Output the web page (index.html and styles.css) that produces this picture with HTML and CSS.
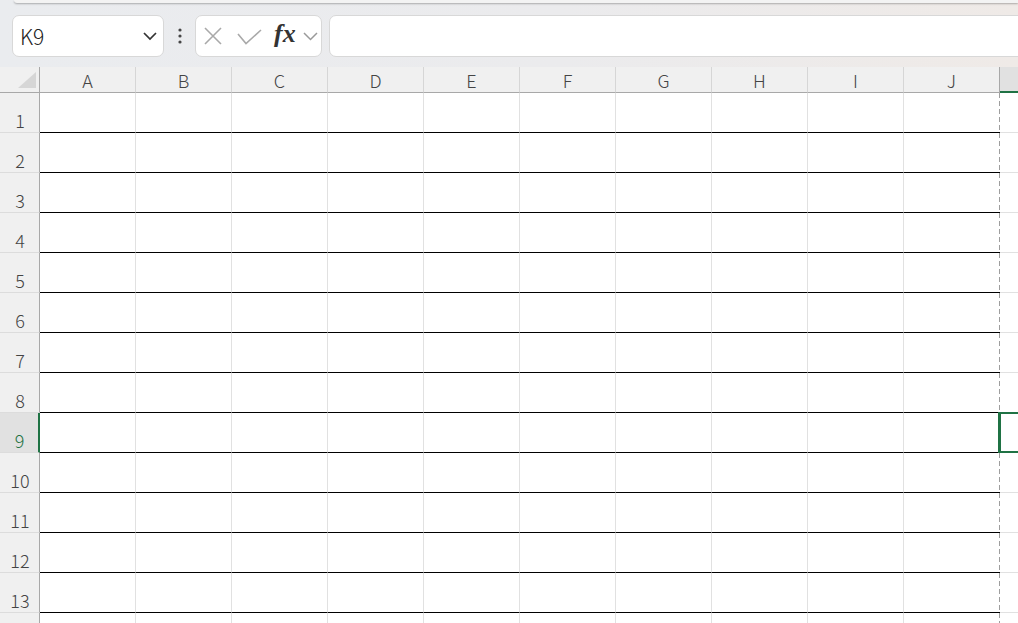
FILE: index.html
```html
<!DOCTYPE html>
<html lang="ja">
<head>
  <meta charset="UTF-8">
  <meta name="viewport" content="width=device-width, initial-scale=1.0">
  <title>Book1 - Excel</title>
  <link rel="stylesheet" href="styles.css">
</head>
<body>
<div class="top-area">
  <div class="ribbon-edge"></div>
  <div class="formula-bar">
    <div class="name-box">
      <span class="cell-ref">K9</span>
      <svg class="name-arrow" width="14" height="9" viewBox="0 0 14 9"><polyline points="1,1 7,7 13,1" fill="none" stroke="#333" stroke-width="1.7"/></svg>
    </div>
    <div class="more-dots">
      <svg width="4" height="16" viewBox="0 0 4 16"><circle cx="2" cy="2" r="1.6"/><circle cx="2" cy="8" r="1.6"/><circle cx="2" cy="14" r="1.6"/></svg>
    </div>
    <div class="func-box">
      <svg class="icon-cancel" width="18" height="18" viewBox="0 0 18 18"><path d="M1 1 L17 17 M17 1 L1 17" stroke="#a9a9a9" stroke-width="1.6" fill="none"/></svg>
      <svg class="icon-enter" width="25" height="16" viewBox="0 0 25 16"><polyline points="1,5 9,14.5 24,1" fill="none" stroke="#a9a9a9" stroke-width="1.6"/></svg>
      <span class="fx">fx</span>
      <svg class="fx-arrow" width="15" height="9" viewBox="0 0 15 9"><polyline points="1,1 7.5,7.5 14,1" fill="none" stroke="#9a9a9a" stroke-width="1.5"/></svg>
    </div>
    <div class="formula-input"></div>
  </div>
</div>

<div class="sheet" id="sheet">
  <div class="selection"></div> <!-- active cell K9 -->
</div>

<script>
  const sheet = document.getElementById('sheet');
  const columns = ['A', 'B', 'C', 'D', 'E', 'F', 'G', 'H', 'I', 'J'];

  function addCell(className, text) {
    const div = document.createElement('div');
    div.className = className;
    if (text) div.textContent = text;
    sheet.appendChild(div);
  }

  // header row
  addCell('corner');
  columns.forEach(c => addCell('col-head', c));
  addCell('col-head active');

  // rows 1..13, plus the top of row 14 (its number is below the window)
  for (let r = 1; r <= 14; r++) {
    const label = r < 14 ? String(r) : '';
    addCell(r === 9 ? 'row-head active' : 'row-head', label);
    columns.forEach((c, i) => addCell(i === 9 ? 'cell page-edge' : 'cell'));
    addCell('cell outside');
  }
</script>
</body>
</html>
```

FILE: styles.css
```css
body {
  margin: 0;
  overflow: hidden;
  background-color: white;
  color: #444;
  font-family: "Noto Sans CJK JP", "Noto Sans", sans-serif;
  font-weight: 300;
}
/* Formula bar area */
.top-area {
  height: 67px;
  background: linear-gradient(90deg, #eaecef 0%, #ebebed 55%, #efeae7 100%);
}
.ribbon-edge {
  height: 3px;
  margin-left: 14px;
  background-color: #f3f3f3;
  border-bottom-left-radius: 10px;
  box-shadow: 0 1px 2px rgba(0, 0, 0, 0.28);
}
.formula-bar {
  display: flex;
  align-items: center;
  height: 42px;
  margin-top: 12px;
}
.name-box,
.func-box,
.formula-input {
  box-sizing: border-box;
  height: 42px;
  background-color: white;
  border: 1px solid #d8d8d8;
  border-radius: 7px;
}
.name-box {
  width: 152px;
  margin-left: 12px;
  display: flex;
  align-items: center;
  justify-content: space-between;
  padding: 0 6px 0 7px;
}
.cell-ref {
  font-size: 21px;
  color: #222;
  line-height: 1;
}
.more-dots {
  width: 31px;
  display: flex;
  justify-content: center;
  padding-left: 1px;
  box-sizing: border-box;
}
.more-dots svg {
  fill: #454545;
}
.func-box {
  width: 127px;
  display: flex;
  align-items: center;
  padding-left: 8px;
}
.icon-cancel {
  margin-right: 15px;
}
.icon-enter {
  margin-right: 12px;
  margin-top: 1px;
}
.fx {
  font-family: "Liberation Serif", serif;
  font-style: italic;
  font-weight: bold;
  font-size: 26px;
  line-height: 1;
  color: #333;
  margin-right: 7px;
  margin-top: -4px;
}
.fx-arrow {
  margin-top: 1px;
}
.formula-input {
  flex: 1;
  margin-left: 7px;
  margin-right: -20px;
}
/* Grid */
.sheet {
  position: relative;
  height: calc(100vh - 67px);
  overflow: hidden;
  display: grid;
  grid-template-columns: 40px repeat(10, 96px) 1fr;
  grid-template-rows: 26px;
  grid-auto-rows: 40px;
}
.sheet > div {
  box-sizing: border-box;
}
.corner {
  position: relative;
  background-color: #f0f0f0;
  border-right: 1px solid #a8a8a8;
  border-bottom: 1px solid #a8a8a8;
}
.corner::after {
  content: "";
  position: absolute;
  right: 3px;
  bottom: 4px;
  width: 18px;
  height: 16px;
  background-color: #d6d6d6;
  clip-path: polygon(100% 0, 100% 100%, 0 100%);
}
.col-head {
  background-color: #f0f0f0;
  border-right: 1px solid #d6d6d6;
  border-bottom: 1px solid #a8a8a8;
  display: flex;
  align-items: flex-end;
  justify-content: center;
  font-size: 18px;
  line-height: 1;
  padding-bottom: 3px;
}
.col-head:nth-child(12) {
  border-right-color: #a8a8a8;
}
.col-head.active {
  background-color: #e1e1e1;
  border-right: none;
  border-bottom: 2px solid #1f7244;
}
.row-head {
  background-color: #f0f0f0;
  border-right: 1px solid #a8a8a8;
  border-bottom: 1px solid #dcdcdc;
  display: flex;
  align-items: flex-end;
  justify-content: center;
  font-size: 18px;
  line-height: 1;
  padding-bottom: 3px;
  padding-left: 1px;
}
.row-head.active {
  background-color: #e1e1e1;
  color: #1f7244;
  border-right: 2px solid #1f7244;
}
.cell {
  border-right: 1px solid #e1e1e1;
  border-bottom: 1px solid black;
}
.cell.page-edge {
  border-right: none;
  background: repeating-linear-gradient(to bottom, #9e9e9e 0 5px, transparent 5px 8px) right top / 1px 100% no-repeat;
}
.cell.outside {
  border-right: none;
  border-bottom-color: #e1e1e1;
}
.selection {
  position: absolute;
  z-index: 2;
  left: 998px;
  top: 345px;
  width: 60px;
  height: 41px;
  box-sizing: border-box;
  border: 2px solid #1f7244;
  border-left-width: 3px;
}
```
